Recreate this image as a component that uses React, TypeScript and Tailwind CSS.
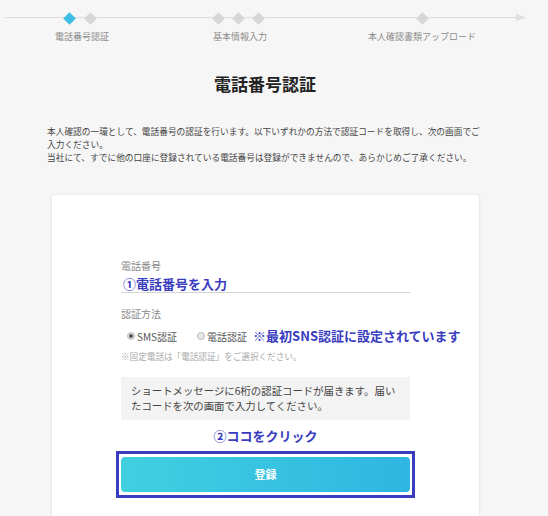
import React from 'react';

const font = { fontFamily: '"Noto Sans CJK JP", "Noto Sans", sans-serif' };

const Diamond: React.FC<{ active?: boolean; className?: string }> = ({ active, className }) => (
  <div className={`w-[12px] h-[12px] flex items-center justify-center shrink-0 ${className ?? ''}`}>
    <div className={`w-[9px] h-[9px] rotate-45 ${active ? 'bg-[#3cbde2]' : 'bg-[#d6d6d6]'}`} />
  </div>
);

const Stepper: React.FC = () => (
  <div className="relative h-[48px]">
    {/* line with arrow behind the steps */}
    <svg className="absolute left-0 top-0" width="548" height="30" viewBox="0 0 548 30">
      <line x1="5" y1="17.5" x2="519" y2="17.5" stroke="#dedede" strokeWidth="1" />
      <polygon points="516,14 526,17.5 516,21" fill="#dedede" />
    </svg>
    <div className="relative flex items-center pt-[12px]">
      <Diamond active className="ml-[63px]" />
      <Diamond className="ml-[9px]" />
      <Diamond className="ml-[116px]" />
      <Diamond className="ml-[8px]" />
      <Diamond className="ml-[8px]" />
      <Diamond className="ml-[152px]" />
    </div>
    <div className="relative flex mt-[7px] text-[9px] leading-[12px] text-[#8a8a8a]">
      <div className="ml-[42px] w-[80px] text-center">電話番号認証</div>
      <div className="ml-[78px] w-[80px] text-center">基本情報入力</div>
      <div className="ml-[82px] w-[120px] text-center">本人確認書類アップロード</div>
    </div>
  </div>
);

const Radio: React.FC<{ checked?: boolean }> = ({ checked }) => (
  <span className="w-[8px] h-[8px] rounded-full border border-[#bdbdbd] bg-[#e6e6e6] flex items-center justify-center shrink-0">
    {checked && <span className="w-[4px] h-[4px] rounded-full bg-[#555]" />}
  </span>
);

const App: React.FC = () => {
  return (
    <div className="min-h-screen w-[548px] h-[516px] overflow-hidden bg-[#f6f6f6] text-[#333]" style={font}>
      <Stepper />

      {/* Title */}
      <h1 className="mt-[24px] w-[530px] text-center text-[17px] leading-[24px] font-bold text-[#222]">
        電話番号認証
      </h1>

      {/* Description */}
      <div className="mt-[29px] ml-[47px] w-[440px] text-[8.7px] leading-[13px] text-[#444]">
        <p>本人確認の一環として、電話番号の認証を行います。以下いずれかの方法で認証コードを取得し、次の画面でご入力ください。</p>
        <p>当社にて、すでに他の口座に登録されている電話番号は登録ができませんので、あらかじめご了承ください。</p>
      </div>

      {/* Card */}
      <div className="mt-[30px] ml-[51px] w-[429px] h-[340px] bg-white rounded-[3px] border border-[#ececec] shadow-[0_0_3px_rgba(0,0,0,0.05)] px-[69px] pt-[64px]">
        <div className="text-[10px] leading-[14px] text-[#888]">電話番号</div>
        <div className="mt-[3px] h-[17px] border-b border-[#d4d4d4] pl-[2px] text-[13px] leading-[16px] font-bold text-[#3a3dbf]">
          ①電話番号を入力
        </div>

        <div className="mt-[14px] text-[10px] leading-[14px] text-[#888]">認証方法</div>
        <div className="mt-[6px] h-[18px] flex items-center pl-[6px] text-[10px] text-[#555] whitespace-nowrap">
          <Radio checked />
          <span className="ml-[2px] shrink-0">SMS認証</span>
          <span className="ml-[20px] shrink-0"><Radio /></span>
          <span className="ml-[2px] shrink-0">電話認証</span>
          <span className="ml-[6px] shrink-0 text-[13px] font-bold text-[#3a3dbf]">※最初SNS認証に設定されています</span>
        </div>
        <div className="mt-[5px] text-[8.6px] leading-[12px] text-[#aaa]">※固定電話は「電話認証」をご選択ください。</div>

        <div className="mt-[15px] bg-[#f3f3f3] pl-[10px] pr-[14px] pt-[6px] pb-[7px] text-[10.4px] leading-[15px] text-[#444]">
          ショートメッセージに6桁の認証コードが届きます。届いたコードを次の画面で入力してください。
        </div>

        <div className="mt-[7px] text-center text-[13px] leading-[18px] font-bold text-[#3a3dbf]">
          ②ココをクリック
        </div>

        <div className="mt-[6px] -mx-[5px] border-[3px] border-[#3a3dbf] px-[2px] py-[3px]">
          <button className="w-full h-[35px] rounded-[4px] bg-gradient-to-r from-[#40d0e0] to-[#2fb6e2] text-white text-[11px] font-bold">
            登録
          </button>
        </div>
      </div>
    </div>
  );
};

export default App;
